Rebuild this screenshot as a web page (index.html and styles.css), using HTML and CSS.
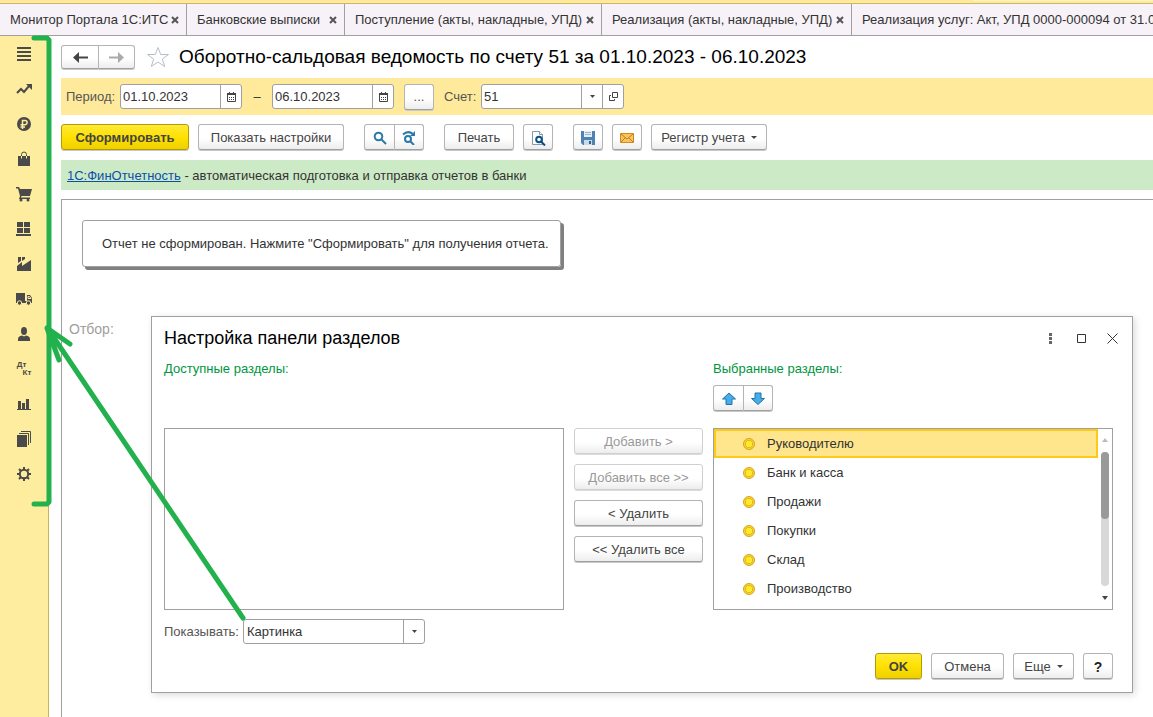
FILE: index.html
```
<!DOCTYPE html>
<html lang="ru">
<head>
<meta charset="utf-8">
<title>Оборотно-сальдовая ведомость по счету 51</title>
<link rel="stylesheet" href="styles.css">
</head>
<body>
<div class="top-strip"><span class="top-strip-panel"></span></div>
<nav class="tabs" aria-label="Открытые окна">
  <div class="tab tab-portal"><a href="#portal">Монитор Портала 1С:ИТС</a><button class="tab-close" aria-label="Закрыть"><svg width="8" height="8" viewBox="0 0 8 8"><path d="M1 1l6 6M7 1L1 7"/></svg></button></div>
  <div class="tab tab-bank"><a href="#bank">Банковские выписки</a><button class="tab-close" aria-label="Закрыть"><svg width="8" height="8" viewBox="0 0 8 8"><path d="M1 1l6 6M7 1L1 7"/></svg></button></div>
  <div class="tab tab-receipt"><a href="#receipt">Поступление (акты, накладные, УПД)</a><button class="tab-close" aria-label="Закрыть"><svg width="8" height="8" viewBox="0 0 8 8"><path d="M1 1l6 6M7 1L1 7"/></svg></button></div>
  <div class="tab tab-sales"><a href="#sales">Реализация (акты, накладные, УПД)</a><button class="tab-close" aria-label="Закрыть"><svg width="8" height="8" viewBox="0 0 8 8"><path d="M1 1l6 6M7 1L1 7"/></svg></button></div>
  <div class="tab tab-last"><a href="#service">Реализация услуг: Акт, УПД 0000-000094 от 31.08.2023</a></div>
</nav>

<div class="workspace">
  <nav class="sections" aria-label="Панель разделов">
    <button aria-label="Главное"><svg viewBox="0 0 16 16"><path d="M1 1h14v2H1zM1 5h14v2H1zM1 9h14v2H1zM1 13h14v2H1z"/></svg></button>
    <button aria-label="Руководителю"><svg viewBox="0 0 16 16"><path class="line" d="M1 12l4-4 3 3 5-6"/><path d="M10 3h6v6z"/></svg></button>
    <button aria-label="Банк и касса"><svg viewBox="0 0 16 16"><circle cx="8" cy="8" r="7"/><path class="cut" d="M6.500 13V4.500H9a2 2 0 0 1 0 4.200H4.500M4.500 11H9"/></svg></button>
    <button aria-label="Продажи"><svg viewBox="0 0 16 16"><path d="M2 5h12v10H2z"/><path class="thin" d="M5.500 5V3.500a2.500 2.500 0 0 1 5 0V5"/><path class="cut-thin" d="M5.500 5v2.500M10.500 5v2.500"/></svg></button>
    <button aria-label="Покупки"><svg viewBox="0 0 16 16"><path d="M0 1h3l1 2h12l-2 7H5.500L5 11.500h9V13H3l1-3L2 2.500H0z"/><circle cx="5" cy="14" r="1.500"/><circle cx="12" cy="14" r="1.500"/></svg></button>
    <button aria-label="Склад"><svg viewBox="0 0 16 16"><path d="M1 1h6v5H1zM8 1h6v5H8zM1 7h6v5H1zM8 7h6v5H8zM0 13h15v2H0z"/></svg></button>
    <button aria-label="Производство"><svg viewBox="0 0 16 16"><path d="M1 15V10l5-4v4l9-6v11zM2 1h3v4L2 7zM6 1h3v2L6 5z"/></svg></button>
    <button aria-label="ОС и НМА"><svg viewBox="0 0 16 16"><path d="M0 2h9v10H0zM9 10h2V4h3l2 3v5H9z"/><path class="cut-thin" d="M12 7.500V5.500h1.500l1.500 2z"/><circle class="wheel" cx="3.500" cy="12" r="2.200"/><circle class="wheel" cx="12.500" cy="12" r="2.200"/></svg></button>
    <button aria-label="Зарплата и кадры"><svg viewBox="0 0 16 16"><ellipse cx="8" cy="5" rx="3" ry="4"/><path d="M2 15v-2q0-3 4-3.500l2 1 2-1q4 .5 4 3.500v2z"/></svg></button>
    <button aria-label="Операции" class="debit-credit"><span>Дт</span><span>Кт</span></button>
    <button aria-label="Отчеты"><svg viewBox="0 0 16 16"><path d="M1 13h14v1H1zM2 5h3v8H2zM6 7h3v6H6zM10 3h3v10h-3z"/></svg></button>
    <button aria-label="Справочники"><svg viewBox="0 0 16 16"><path d="M1 4h10v12H1z"/><path class="thin" d="M3 2.500h9.500V14M5 .5h9.500V12"/></svg></button>
    <button aria-label="Администрирование"><svg viewBox="0 0 16 16"><circle class="line" cx="8" cy="8" r="4.200"/><path class="line" d="M8 1v2M8 13v2M1 8h2M13 8h2M3 3l1.700 1.700M11.300 11.300L13 13M13 3l-1.700 1.700M4.700 11.300L3 13"/></svg></button>
  </nav>

  <main class="page">
    <header class="page-head">
      <div class="button-pair history">
        <button class="btn" aria-label="Назад"><svg width="15" height="11" viewBox="0 0 15 11"><path class="arrow-line" d="M3 5.500h12"/><path class="arrow-head" d="M6 0v11L0 5.500z"/></svg></button>
        <button class="btn faded" aria-label="Вперед"><svg width="15" height="11" viewBox="0 0 15 11"><path class="arrow-line" d="M0 5.500h12"/><path class="arrow-head" d="M9 0v11l6-5.500z"/></svg></button>
      </div>
      <button class="star" aria-label="В избранное"><svg width="24" height="22" viewBox="0 0 24 22"><path d="M12 1.500l2.700 7H22.500l-6.200 4.600 2.400 7.400L12 16l-6.700 4.500 2.400-7.400L1.500 8.500h7.800z"/></svg></button>
      <h1>Оборотно-сальдовая ведомость по счету 51 за 01.10.2023 - 06.10.2023</h1>
    </header>

    <div class="period">
      <label for="from">Период:</label>
      <div class="field field-date"><input id="from" value="01.10.2023"><button aria-label="Календарь"><svg width="9" height="10" viewBox="0 0 9 10"><path class="cal" d="M.5 2.500h8v7h-8z"/><path d="M0 1h9v2H0zM2 0h1v2H2zM6 0h1v2H6zM2 5h1v1H2zM4 5h1v1H4zM6 5h1v1H6zM2 7h1v1H2zM4 7h1v1H4zM6 7h1v1H6z"/></svg></button></div>
      <span class="dash">–</span>
      <div class="field field-date"><input aria-label="Конец периода" value="06.10.2023"><button aria-label="Календарь"><svg width="9" height="10" viewBox="0 0 9 10"><path class="cal" d="M.5 2.500h8v7h-8z"/><path d="M0 1h9v2H0zM2 0h1v2H2zM6 0h1v2H6zM2 5h1v1H2zM4 5h1v1H4zM6 5h1v1H6zM2 7h1v1H2zM4 7h1v1H4zM6 7h1v1H6z"/></svg></button></div>
      <button class="btn btn-icon more">...</button>
      <label for="account">Счет:</label>
      <div class="field field-account"><input id="account" value="51"><button aria-label="Выбрать"><svg width="5" height="3" viewBox="0 0 5 3"><path d="M0 0h5L2.500 3z"/></svg></button><button aria-label="Открыть"><svg width="9" height="9" viewBox="0 0 9 9"><path class="cal" d="M3.500.5h5v5h-5zM2 3.500H.5v5h5V7"/></svg></button></div>
    </div>

    <div class="toolbar">
      <button class="btn primary generate">Сформировать</button>
      <button class="btn settings">Показать настройки</button>
      <div class="button-pair search">
        <button class="btn" aria-label="Найти"><svg width="14" height="14" viewBox="0 0 14 14"><circle class="lens" cx="5.500" cy="5.500" r="3.800"/><path class="lens-grip" d="M8.500 8.500L13 13"/></svg></button>
        <button class="btn" aria-label="Найти далее"><svg width="14" height="14" viewBox="0 0 14 14"><circle class="lens" cx="6" cy="8" r="3"/><path class="lens-grip" d="M8.500 10.500L12 14"/><path class="lens" d="M1 3.500Q6-1 11 3"/><path class="lens-fill" d="M13 0v5H8z"/></svg></button>
      </div>
      <button class="btn print">Печать</button>
      <button class="btn btn-icon preview" aria-label="Предварительный просмотр"><svg width="16" height="16" viewBox="0 0 16 16"><path class="sheet" d="M2.500 1.500h7l3 3v10h-10z"/><path class="sheet" d="M9.500 1.500v3h3"/><circle class="zoom" cx="9" cy="9.500" r="2.800"/><path class="zoom" d="M11 11.500l4 4"/></svg></button>
      <button class="btn btn-icon" aria-label="Сохранить"><svg width="16" height="16" viewBox="0 0 16 16"><path fill="#4e83b1" d="M1 1h14v14H3l-2-2z"/><path fill="#e4eef6" d="M4 1h8v6H4z"/><path fill="#9bb5ca" d="M5 2h6v1H5zM5 4h6v1H5z"/><path fill="#cadbe8" d="M4 10h8v5H4z"/><path fill="#315f87" d="M9 11h2v3H9z"/></svg></button>
      <button class="btn btn-icon" aria-label="Отправить"><svg width="14" height="12" viewBox="0 0 14 12"><path fill="#fbc45b" stroke="#cc8a25" d="M.5 1.500h13v9H.5z"/><path fill="none" stroke="#bf7c1c" d="M1 2l6 5 6-5M1 10l4-4M13 10L9 6"/></svg></button>
      <button class="btn register">Регистр учета<svg width="6" height="3" viewBox="0 0 6 3"><path d="M0 0h6L3 3z"/></svg></button>
    </div>

    <div class="promo"><a href="#fin">1С:ФинОтчетность</a> - автоматическая подготовка и отправка отчетов в банки</div>

    <section class="report">
      <p class="notice">Отчет не сформирован. Нажмите "Сформировать" для получения отчета.</p>
      <p class="filter">Отбор:</p>
    </section>
  </main>
</div>

<section class="dialog" role="dialog" aria-labelledby="dialog-title">
  <header class="dialog-head">
    <h2 id="dialog-title">Настройка панели разделов</h2>
    <button aria-label="Меню"><svg width="11" height="11" viewBox="0 0 11 11"><path class="dots" d="M4 0h3v3H4zM4 4h3v3H4zM4 8h3v3H4z"/></svg></button>
    <button aria-label="Развернуть"><svg width="11" height="11" viewBox="0 0 11 11"><path class="win-line" d="M1.500 1.500h8v8h-8z"/></svg></button>
    <button aria-label="Закрыть"><svg width="11" height="11" viewBox="0 0 11 11"><path class="win-line" d="M.5.5l10 10M10.500.5l-10 10"/></svg></button>
  </header>
  <div class="picker">
    <h3>Доступные разделы:</h3>
    <h3 class="chosen">Выбранные разделы:</h3>
    <div class="button-pair order">
      <button class="btn" aria-label="Вверх"><svg width="16" height="14" viewBox="0 0 16 14"><path class="move" d="M8 1l6.500 6H11v5.500H5V7H1.500z"/></svg></button>
      <button class="btn" aria-label="Вниз"><svg width="16" height="14" viewBox="0 0 16 14"><path class="move" d="M8 12.500L1.500 6.500H5V1h6v5.500h3.500z"/></svg></button>
    </div>
    <ul class="list available" aria-label="Доступные разделы"></ul>
    <div class="transfer">
      <button class="btn" disabled>Добавить &gt;</button>
      <button class="btn" disabled>Добавить все &gt;&gt;</button>
      <button class="btn">&lt; Удалить</button>
      <button class="btn">&lt;&lt; Удалить все</button>
    </div>
    <div class="list selected">
      <ul aria-label="Выбранные разделы">
        <li class="current"><i></i>Руководителю</li>
        <li><i></i>Банк и касса</li>
        <li><i></i>Продажи</li>
        <li><i></i>Покупки</li>
        <li><i></i>Склад</li>
        <li><i></i>Производство</li>
      </ul>
      <div class="scroll">
        <svg class="dim" width="6" height="4" viewBox="0 0 6 4"><path d="M0 4h6L3 0z"/></svg>
        <div class="track"><div class="thumb"></div></div>
        <svg width="6" height="4" viewBox="0 0 6 4"><path d="M0 0h6L3 4z"/></svg>
      </div>
    </div>
  </div>
  <div class="show">
    <label for="show">Показывать:</label>
    <div class="combo">
      <select id="show"><option>Картинка</option><option>Текст</option></select>
      <span class="combo-arrow"><svg width="5" height="3" viewBox="0 0 5 3"><path d="M0 0h5L2.500 3z"/></svg></span>
    </div>
  </div>
  <footer class="dialog-foot">
    <button class="btn primary ok">OK</button>
    <button class="btn cancel">Отмена</button>
    <button class="btn other">Еще<svg width="6" height="3" viewBox="0 0 6 3"><path d="M0 0h6L3 3z"/></svg></button>
    <button class="btn btn-icon help">?</button>
  </footer>
</section>

<svg class="marker" width="260" height="640" viewBox="0 0 260 640" aria-hidden="true">
  <path d="M34 38h13l2 2v462l-2 2H34"/>
  <path d="M243 618L48 329M70 344L47 328l12 32"/>
</svg>
</body>
</html>
```

FILE: styles.css
```
* { box-sizing: border-box; }

body {
  margin: 0;
  min-height: 100vh;
  display: flex;
  flex-direction: column;
  position: relative;
  overflow: hidden;
  background: #fff;
  color: #333;
  font: 13px/16px "Liberation Sans", Arial, sans-serif;
}

h1, h2, h3, p, ul { margin: 0; padding: 0; font-weight: normal; }
button, input, select { font: inherit; color: inherit; }
button { padding: 0; border: 0; background: none; }
svg { display: block; fill: #444; flex: none; }

.top-strip {
  height: 4px;
  display: flex;
  justify-content: flex-end;
  background: #ffea9c;
  border-bottom: 1px solid #cdb56a;
}
.top-strip-panel { width: 180px; height: 1px; background: #fff5cc; }

.tabs {
  display: flex;
  height: 32px;
  background: #f7f2f7;
  border-bottom: 1px solid #a0a0a0;
}
.tab {
  display: flex;
  flex: none;
  align-items: center;
  justify-content: space-between;
  padding: 0 7px 0 10px;
  border-right: 1px solid #a0a0a0;
  white-space: nowrap;
}
.tab a { color: #333; text-decoration: none; }
.tab-portal { width: 187px; }
.tab-bank { width: 158px; }
.tab-receipt { width: 257px; }
.tab-sales { width: 250px; }
.tab-last { flex: 1; min-width: 0; overflow: hidden; border-right: 0; padding-right: 0; }
.tab-close svg { fill: none; stroke: #555; stroke-width: 2; }

.workspace { display: flex; flex: 1; }

.sections {
  width: 49px;
  flex: none;
  display: flex;
  flex-direction: column;
  background: #ffed9f;
  border-right: 1px solid #c9b264;
}
.sections button {
  height: 35px;
  display: flex;
  align-items: center;
  justify-content: center;
}
.sections svg { width: 16px; height: 16px; fill: #4a4a4a; }
.sections .line { fill: none; stroke: #4a4a4a; stroke-width: 2; }
.sections .thin { fill: none; stroke: #4a4a4a; stroke-width: 1; }
.sections .cut { fill: none; stroke: #ffed9f; stroke-width: 1.500; }
.sections .cut-thin { fill: none; stroke: #ffed9f; stroke-width: 1; }
.sections .wheel { stroke: #ffed9f; stroke-width: 1; }
.sections .debit-credit {
  flex-direction: column;
  font-size: 8px;
  line-height: 8px;
  font-weight: bold;
  color: #4a4a4a;
}
.debit-credit span:first-child { margin-right: 5px; }
.debit-credit span:last-child { margin-left: 6px; }

.page {
  flex: 1;
  min-width: 0;
  padding: 8px 0 0 12px;
  display: flex;
  flex-direction: column;
}

.btn {
  height: 26px;
  margin-bottom: 1px;
  padding-top: 1px;
  display: flex;
  align-items: center;
  justify-content: center;
  gap: 6px;
  color: #444;
  background: linear-gradient(#fff 55%, #ededed);
  border: 1px solid #b4b4b4;
  border-bottom-color: #a0a0a0;
  box-shadow: 0 1px 0 #c8c8c8;
  border-radius: 3px;
  white-space: nowrap;
}
.btn:disabled { color: #999; border-color: #d0d0d0; box-shadow: 0 1px 0 #dcdcdc; }
.primary {
  font-weight: bold;
  background: linear-gradient(#ffe93a, #ffe100 50%, #efd000);
  border-color: #b39c00;
}
.btn-icon { width: 30px; }
.button-pair { display: flex; }
.button-pair .btn { width: 31px; border-radius: 3px 0 0 3px; }
.button-pair .btn + .btn { width: 29px; border-left: 0; border-radius: 0 3px 3px 0; }

.page-head { display: flex; align-items: center; height: 26px; }
.history .btn { height: 24px; width: 38px; }
.history .btn + .btn { width: 36px; }
.faded svg { opacity: .45; }
.arrow-line { stroke: #444; stroke-width: 2; }
.arrow-head { fill: #444; }
.star { margin: 0 9px 0 11px; }
.star svg { fill: none; stroke: #b6bec8; }
.page-head h1 { font-size: 19px; line-height: 24px; color: #000; white-space: nowrap; }

.period {
  display: flex;
  align-items: center;
  height: 37px;
  margin-top: 8px;
  padding-left: 5px;
  background: #ffea9c;
}
.period label { color: #555; width: 54px; }
.period label[for="account"] { width: 37px; }
.field {
  display: flex;
  height: 25px;
  background: #fff;
  border: 1px solid #a0a0a0;
  border-radius: 3px;
  overflow: hidden;
}
.field input {
  flex: 1;
  min-width: 0;
  padding: 0 2px;
  border: 0;
  background: none;
}
.field button {
  width: 21px;
  display: flex;
  align-items: center;
  justify-content: center;
  border-left: 1px solid #a0a0a0;
}
.field-date { width: 122px; }
.field-account { width: 143px; }
.cal { fill: none; stroke: #444; }
.dash { width: 30px; text-align: center; }
.more { margin: 0 10px; color: #555; }

.toolbar { display: flex; margin-top: 9px; }
.generate { width: 128px; }
.settings { width: 146px; margin-left: 9px; }
.search { margin-left: 20px; }
.print { width: 70px; margin-left: 20px; }
.toolbar .btn-icon { margin-left: 9px; }
.toolbar .preview { margin-right: 11px; }
.toolbar .register { width: 116px; margin-left: 9px; }
.lens { fill: none; stroke: #2c78a8; stroke-width: 2; }
.lens-grip { stroke: #2c78a8; stroke-width: 2; }
.lens-fill { fill: #2c78a8; }
.sheet { fill: #fff; stroke: #8298ac; }
.zoom { fill: #fff; stroke: #0b4f83; stroke-width: 2; }

.promo {
  height: 30px;
  margin-top: 9px;
  padding: 8px 6px 6px;
  background: #cdeac6;
}
.promo a { color: #0b50a8; }

.report {
  flex: 1;
  margin-top: 9px;
  border: solid #a0a0a0;
  border-width: 1px 0 0 1px;
}
.notice {
  width: fit-content;
  margin: 20px 0 0 20px;
  padding: 15px 11px 14px 19px;
  border: 1px solid #a0a0a0;
  border-radius: 3px;
  box-shadow: 3px 3px 0 #808080;
}
.filter { margin: 54px 0 0 7px; font-size: 14px; color: #a0a0a0; }

.dialog {
  position: absolute;
  left: 151px;
  right: 20px;
  top: 316px;
  padding: 8px 19px 12px 12px;
  background: #fff;
  border: 1px solid #a0a0a0;
  box-shadow: 2px 2px 7px rgba(0, 0, 0, .14);
}
.dialog-head { display: flex; align-items: center; gap: 20px; height: 26px; padding-right: 15px; margin-right: -20px; }
.dialog-head h2 { flex: 1; font-size: 18px; line-height: 24px; color: #000; }
.dots { fill: #666; }
.win-line { fill: none; stroke: #333; }

.picker {
  display: grid;
  grid-template-columns: 1fr 129px 1fr;
  grid-template-rows: 16px 27px auto;
  gap: 8px 10px;
  margin-top: 10px;
}
.picker h3 { grid-row: 1; grid-column: 1; font-size: 13px; line-height: 16px; color: #009640; }
.picker .chosen { grid-column: 3; }
.order { grid-row: 2; grid-column: 3; }
.move { fill: #45adea; stroke: #2573a5; }
.list { grid-row: 3; margin-top: 8px; border: 1px solid #a0a0a0; height: 182px; }
.available { grid-column: 1; }
.transfer {
  grid-row: 3;
  grid-column: 2;
  margin-top: 8px;
  display: flex;
  flex-direction: column;
  gap: 9px;
}
.selected { grid-column: 3; display: flex; }
.selected ul { flex: 1; list-style: none; }
.selected li {
  display: flex;
  align-items: center;
  gap: 12px;
  height: 29px;
  padding-left: 29px;
}
.selected li.current {
  padding-left: 27px;
  background: #ffe68c;
  border: 2px solid #ffc91a;
}
.selected i {
  width: 12px;
  height: 12px;
  border: 1px solid #d3a318;
  border-radius: 50%;
  background: radial-gradient(circle, #ffe92d 45%, #e6b516 50%, #ffd637 65%);
}
.scroll {
  width: 14px;
  display: flex;
  flex-direction: column;
  align-items: center;
  padding: 9px 0;
  gap: 10px;
}
.scroll svg.dim { fill: #bbb; }
.track { flex: 1; width: 8px; border-radius: 4px; background: #d8d8d8; }
.thumb { height: 50%; border-radius: 4px; background: #999; }

.show { display: flex; align-items: center; margin-top: 9px; }
.show label { width: 79px; color: #555; }
.combo {
  display: grid;
  grid-template-columns: 1fr 21px;
  width: 182px;
  height: 25px;
  border: 1px solid #a0a0a0;
  border-radius: 3px;
}
.combo select {
  grid-row: 1;
  grid-column: 1 / 3;
  padding: 0 3px;
  border: 0;
  background: none;
  appearance: none;
}
.combo-arrow {
  grid-row: 1;
  grid-column: 2;
  display: grid;
  place-items: center;
  border-left: 1px solid #a0a0a0;
  pointer-events: none;
}

.dialog-foot { display: flex; justify-content: flex-end; gap: 9px; margin-top: 9px; }
.ok { width: 47px; }
.cancel { width: 73px; }
.other { width: 61px; }
.help { font-weight: bold; font-size: 14px; color: #222; }

.marker { position: absolute; left: 0; top: 0; pointer-events: none; }
.marker path {
  fill: none;
  stroke: #22b14c;
  stroke-width: 5;
  stroke-linecap: round;
  stroke-linejoin: round;
}
```
